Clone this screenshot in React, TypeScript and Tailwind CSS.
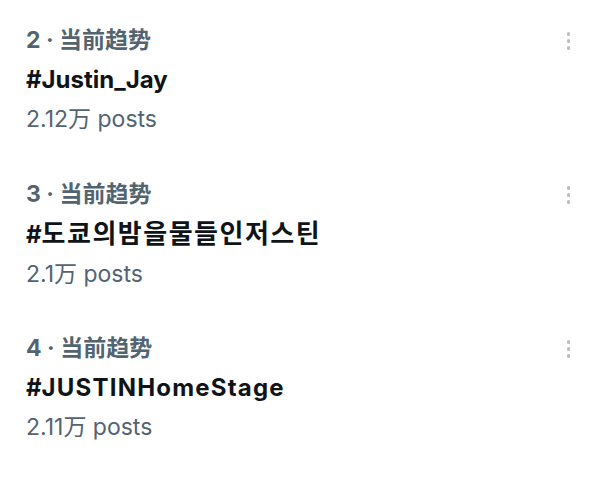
const trends = [
  { rank: 2, rest: 'Justin_Jay', kind: 'latin', posts: '2.12万 posts' },
  { rank: 3, rest: '도쿄의밤을물들인저스틴', kind: 'ko', posts: '2.1万 posts' },
  { rank: 4, rest: 'JUSTINHomeStage', kind: 'caps', posts: '2.11万 posts' },
]

export default function App() {
  return (
    <div
      className="h-[484px] w-[600px] bg-white pt-[21px]"
      style={{ fontFamily: 'Inter, "Noto Sans CJK SC", "Noto Sans CJK KR", sans-serif' }}
    >
      {trends.map((t) => (
        <div key={t.rank} className="relative h-[154px] pl-[26px] pr-6">
          <p className="text-[23px] font-bold leading-[39px] text-[#536471]">
            {t.rank} · 当前趋势
          </p>
          <p className="text-[24px] font-bold leading-[40px] text-[#0f1419]">
            #
            {t.kind === 'ko' ? (
              <span className="text-[26px] tracking-[1.5px]">{t.rest}</span>
            ) : t.kind === 'caps' ? (
              <span className="tracking-[1.2px]">{t.rest}</span>
            ) : (
              t.rest
            )}
          </p>
          <p className="text-[23px] leading-[39px] text-[#536471]">{t.posts}</p>
          <div className="absolute right-[30px] top-[11px] flex flex-col gap-[3.5px]">
            <span className="h-[3.5px] w-[3.5px] rounded-full bg-[#b8bdc2]" />
            <span className="h-[3.5px] w-[3.5px] rounded-full bg-[#b8bdc2]" />
            <span className="h-[3.5px] w-[3.5px] rounded-full bg-[#b8bdc2]" />
          </div>
        </div>
      ))}
    </div>
  )
}
